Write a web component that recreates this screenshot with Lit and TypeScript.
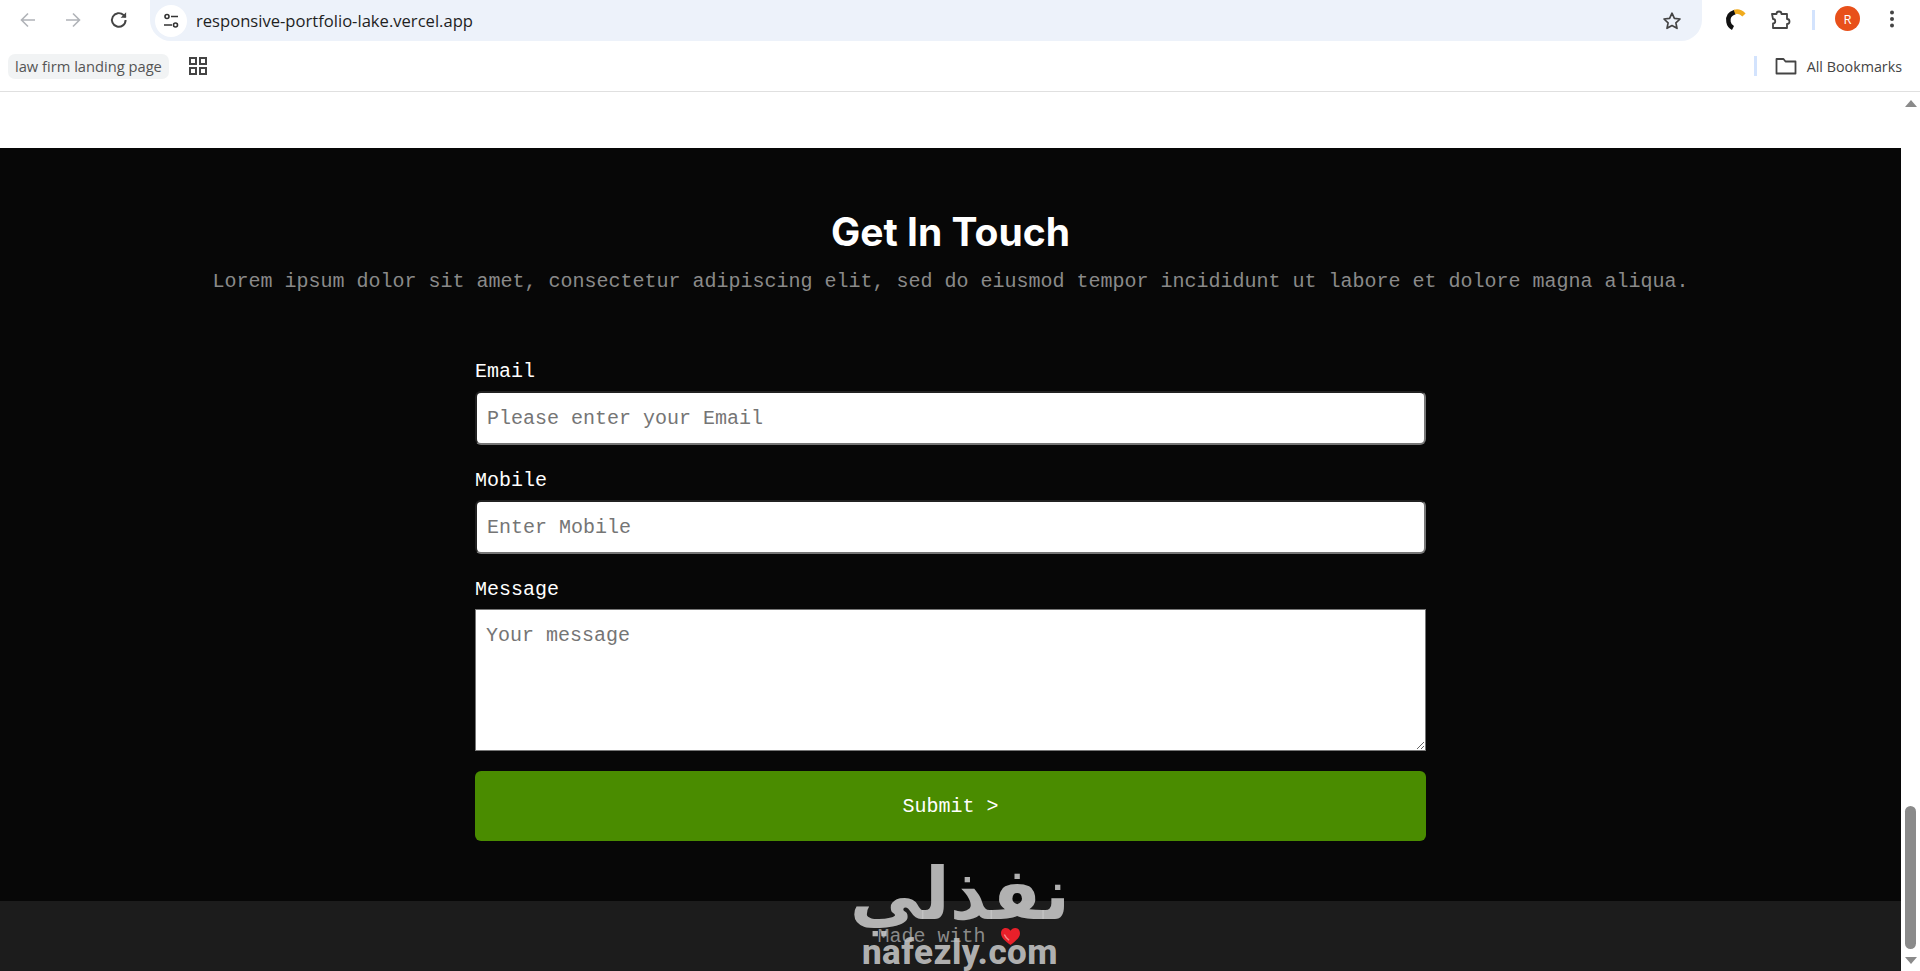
import { LitElement, html, css } from "lit";
import { customElement } from "lit/decorators.js";

@customElement("app-root")
export class AppRoot extends LitElement {
  static styles = css`
    :host { display: block; width: 1920px; height: 971px; overflow: hidden; position: relative; background: #fff; font-family: "Open Sans", "Liberation Sans", sans-serif; }
    .toolbar { height: 43px; display: flex; align-items: flex-start; position: relative; }
    .nav { width: 150px; display: flex; height: 40px; align-items: center; padding-left: 18px; box-sizing: border-box; gap: 25px; }
    .nav svg { flex: none; }
    .omni { width: 1552px; height: 41px; background: #edf2fa; border-radius: 0 0 21px 21px; display: flex; align-items: center; padding-left: 5px; box-sizing: border-box; }
    .chip { width: 32px; height: 32px; border-radius: 50%; background: #fff; display: flex; align-items: center; justify-content: center; flex: none; }
    .url { margin-left: 9px; font-size: 16.6px; color: #1f1f1f; flex: 1; }
    .star { margin-right: 20px; display: flex; }
    .tools { flex: 1; display: flex; align-items: center; height: 40px; position: relative; }
    .tools > * { position: absolute; }
    .avatar { left: 133px; top: 6px; width: 25px; height: 25px; border-radius: 50%; background: #e8501a; color: #fff; font-size: 13px; display: flex; align-items: center; justify-content: center; }
    .divider { width: 3px; background: #d3e3fd; }
    .bookmarks { height: 49px; box-sizing: border-box; border-bottom: 1px solid #e0e0e0; display: flex; align-items: center; padding: 0 18px 2px 8px; }
    .bm { background: #f1f3f4; height: 25px; border-radius: 7px; padding: 0 7px; display: flex; align-items: center; font-size: 14.7px; color: #555; margin-right: 19px; }
    .spacer { flex: 1; }
    .bookmarks .divider { height: 20px; margin-right: 18px; }
    .all { margin-left: 10px; font-size: 14.3px; color: #444; }

    .viewport { display: flex; height: 879px; }
    .page { flex: 1; display: flex; flex-direction: column; min-width: 0; }
    .gap { height: 56px; background: #fff; flex: none; }
    .contact { height: 753px; flex: none; background: #070707; box-sizing: border-box; padding-top: 58px; display: flex; flex-direction: column; align-items: center; font-family: "Liberation Mono", monospace; }
    h2 { margin: 0; font-family: "Inter", "Lato", sans-serif; font-weight: 700; font-size: 39px; line-height: 52px; color: #fff; }
    .sub { margin: 9px 0 0; font-size: 20px; line-height: 30px; color: #8a8a8a; }
    form { width: 951px; margin-top: 60px; display: flex; flex-direction: column; }
    label { font-size: 20px; line-height: 30px; color: #fff; height: 30px; margin-bottom: 4px; }
    input, textarea { font-family: "Liberation Mono", monospace; font-size: 20px; background: #fff; color: #111; box-sizing: border-box; width: 100%; outline: none; margin: 0; }
    input { height: 54px; border: 2px inset #767676; border-radius: 6px; padding: 0 10px; margin-bottom: 21px; }
    textarea { height: 142px; display: block; border: 1px solid #767676; padding: 14px 10px; margin-bottom: 20px; resize: vertical; }
    ::placeholder { color: #757575; opacity: 1; }
    button { height: 70px; border: none; border-radius: 6px; background: #4a8c00; color: #fff; font-family: "Liberation Mono", monospace; font-size: 20px; }
    footer { flex: 1; background: #1c1c1c; display: flex; justify-content: center; align-items: flex-start; padding-top: 24px; font-family: "Liberation Mono", monospace; font-size: 20px; color: #8a8a8a; gap: 14px; }
    footer svg { margin: 2px 3px 0 0; }

    .scrollbar { width: 19px; flex: none; background: #fff; display: flex; flex-direction: column; align-items: center; }
    .up { margin-top: 8px; width: 0; height: 0; border-left: 6.5px solid transparent; border-right: 6.5px solid transparent; border-bottom: 7px solid #8a8a8a; }
    .thumb { margin-top: 699px; width: 11px; height: 143px; border-radius: 6px; background: #8a8a8a; }
    .down { margin-top: 8px; width: 0; height: 0; border-left: 6.5px solid transparent; border-right: 6.5px solid transparent; border-top: 7px solid #8a8a8a; }

    .mark { position: absolute; left: 820px; top: 852px; width: 280px; height: 119px; display: flex; flex-direction: column; align-items: center; color: rgba(196,196,196,.9); pointer-events: none; }
    .ar { font-family: "DejaVu Sans", sans-serif; font-weight: 700; font-size: 72px; line-height: 84px; height: 84px; white-space: nowrap; }
    .en { font-family: "Roboto", sans-serif; font-weight: 800; font-size: 35px; letter-spacing: 0.5px; line-height: 34px; white-space: nowrap; }
  `;

  render() {
    return html`
      <div class="toolbar">
        <div class="nav">
          <svg width="20" height="20" viewBox="0 0 20 20" fill="none" stroke="#b0b3b8" stroke-width="1.6"><path d="M17 10H3.500M10 3.500 3.500 10l6.500 6.500"/></svg>
          <svg width="20" height="20" viewBox="0 0 20 20" fill="none" stroke="#b0b3b8" stroke-width="1.6"><path d="M3 10h13.500M10 3.500l6.500 6.500-6.500 6.500"/></svg>
          <svg width="22" height="22" viewBox="0 0 20 20" fill="none" stroke="#444" stroke-width="1.8"><path d="M16 10a6.200 6.200 0 1 1-1.900-4.500L16 7.300"/><path d="M16.500 3v5h-5z" fill="#444" stroke="none"/></svg>
        </div>
        <div class="omni">
          <div class="chip">
            <svg width="18" height="18" viewBox="0 0 18 18" fill="none" stroke="#333" stroke-width="1.6"><circle cx="5" cy="4.500" r="2"/><path d="M9 4.500h7M2 13h8"/><circle cx="13.500" cy="13" r="2"/></svg>
          </div>
          <div class="url">responsive-portfolio-lake.vercel.app</div>
          <div class="star"><svg width="20" height="20" viewBox="0 0 20 20" fill="none" stroke="#444" stroke-width="1.7" stroke-linejoin="round"><path d="M10 2.200l2.400 5.100 5.600.7-4.100 3.800 1.100 5.500-5-2.800-5 2.800 1.100-5.500L2 8l5.600-.7z"/></svg></div>
        </div>
        <div class="tools">
          <svg style="left:22px;top:8px" width="24" height="24" viewBox="0 0 24 24" fill="none" stroke-width="4.500"><path d="M11 4C6 5.500 3.500 9 4.500 14c.5 3 2.500 5 4.500 6" stroke="#111"/><path d="M10.500 4c3-1 7 .5 9.500 3" stroke="#f0ab1e"/></svg>
          <svg style="left:66px;top:7px" width="24" height="24" viewBox="0 0 24 24" fill="none" stroke="#444" stroke-width="1.800" stroke-linejoin="round"><path d="M4 7h4.500a2.500 2.500 0 0 1 5 0H19v5a2.500 2.500 0 0 1 0 5v4H5v-4.500a2.200 2.200 0 0 0 0-4.500z"/></svg>
          <div class="divider" style="left:110px;top:10px;height:20px"></div>
          <div class="avatar">R</div>
          <svg style="left:180px;top:9px" width="20" height="20" viewBox="0 0 20 20" fill="#444"><circle cx="10" cy="3.500" r="2"/><circle cx="10" cy="10" r="2"/><circle cx="10" cy="16.500" r="2"/></svg>
        </div>
      </div>
      <div class="bookmarks">
        <div class="bm">law firm landing page</div>
        <svg width="20" height="20" viewBox="0 0 20 20" fill="none" stroke="#444" stroke-width="2"><rect x="2" y="2" width="6" height="6"/><rect x="12" y="2" width="6" height="6"/><rect x="2" y="12" width="6" height="6"/><rect x="12" y="12" width="6" height="6"/></svg>
        <div class="spacer"></div>
        <div class="divider"></div>
        <svg width="22" height="20" viewBox="0 0 22 20" fill="none" stroke="#444" stroke-width="1.8" stroke-linejoin="round"><path d="M1.500 3h7l2 2.500h10v12h-19z"/></svg>
        <div class="all">All Bookmarks</div>
      </div>
      <div class="viewport">
        <div class="page">
          <div class="gap"></div>
          <section class="contact">
            <h2>Get In Touch</h2>
            <p class="sub">Lorem ipsum dolor sit amet, consectetur adipiscing elit, sed do eiusmod tempor incididunt ut labore et dolore magna aliqua.</p>
            <form>
              <label>Email</label>
              <input placeholder="Please enter your Email" />
              <label>Mobile</label>
              <input placeholder="Enter Mobile" />
              <label>Message</label>
              <textarea placeholder="Your message"></textarea>
              <button type="button">Submit &gt;</button>
            </form>
          </section>
          <footer>
            <span>Made with</span>
            <svg width="21" height="19" viewBox="0 0 22 20"><path d="M11 19C5 14.500 1 11 1 6.500 1 3 3.500 1 6 1c2.200 0 4 1.200 5 3 1-1.800 2.800-3 5-3 2.500 0 5 2 5 5.500C21 11 17 14.500 11 19z" fill="#e8202a"/><path d="M4.500 8c1 2.500 3 4.500 5 6" stroke="#f58a8a" stroke-width="1.500" fill="none"/></svg>
          </footer>
        </div>
        <div class="scrollbar">
          <div class="up"></div>
          <div class="thumb"></div>
          <div class="down"></div>
        </div>
      </div>
      <div class="mark">
        <div class="ar" dir="rtl" lang="ar">نفذلي</div>
        <div class="en">nafezly.com</div>
      </div>
    `;
  }
}
